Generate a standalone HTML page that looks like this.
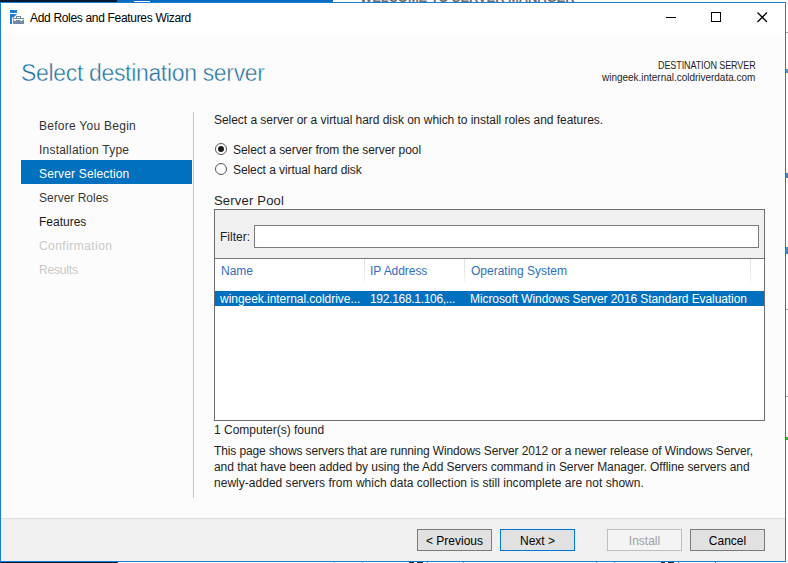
<!DOCTYPE html>
<html><head><meta charset="utf-8">
<style>
*{margin:0;padding:0;box-sizing:border-box}
html,body{width:788px;height:563px;overflow:hidden;background:#fff;font-family:"Liberation Sans",sans-serif;color:#1e1e1e;position:relative}
.a{position:absolute}
.t{position:absolute;white-space:pre;line-height:1;font-size:12px}
.nav{left:39px;color:#333}
.btn{position:absolute;top:529px;height:22px;width:75px;border:1px solid #7a7a7a;background:#e1e1e1;font-size:12px;text-align:center;line-height:22px;color:#000}
</style></head><body>
<!-- background strips -->
<div class="a" style="left:0;top:0;width:117px;height:2px;background:#061a33"></div>
<div class="a" style="left:117px;top:0;width:216px;height:2px;background:#0a6cc0"></div>
<div class="a" style="left:134px;top:1px;width:16px;height:1px;background:#fff"></div>
<div class="a" style="left:0;top:562px;width:118px;height:1px;background:#061a33"></div>
<div class="t" style="left:360px;top:-9px;font-size:13px;font-weight:bold;letter-spacing:-0.1px;color:#6e6e6e">WELCOME TO SERVER MANAGER</div>
<div class="a" style="left:786px;top:32px;width:2px;height:1px;background:#9a9a9a"></div>
<div class="a" style="left:786px;top:69px;width:2px;height:4px;background:#4a90d8"></div>
<div class="a" style="left:786px;top:173px;width:2px;height:5px;background:#3a7ad0"></div>
<div class="a" style="left:786px;top:247px;width:2px;height:7px;background:#3a8ad0"></div>
<div class="a" style="left:786px;top:309px;width:2px;height:1px;background:#9a9a9a"></div>
<div class="a" style="left:786px;top:396px;width:2px;height:1px;background:#9a9a9a"></div>
<div class="a" style="left:786px;top:437px;width:2px;height:3px;background:#00c400"></div>
<div class="a" style="left:334px;top:562px;width:1px;height:1px;background:#b0b0b0"></div>
<div class="a" style="left:362px;top:562px;width:1px;height:1px;background:#b0b0b0"></div>
<div class="a" style="left:409px;top:562px;width:5px;height:1px;background:#2a2a2a"></div>
<div class="a" style="left:417px;top:562px;width:6px;height:1px;background:#2a2a2a"></div>
<div class="a" style="left:427px;top:562px;width:1px;height:1px;background:#909090"></div>
<div class="a" style="left:463px;top:562px;width:1px;height:1px;background:#909090"></div>
<div class="a" style="left:596px;top:562px;width:1px;height:1px;background:#909090"></div>
<div class="a" style="left:614px;top:562px;width:1px;height:1px;background:#909090"></div>
<div class="a" style="left:661px;top:562px;width:4px;height:1px;background:#2a2a2a"></div>
<div class="a" style="left:668px;top:562px;width:6px;height:1px;background:#2a2a2a"></div>
<div class="a" style="left:678px;top:562px;width:1px;height:1px;background:#909090"></div>
<div class="a" style="left:715px;top:562px;width:1px;height:1px;background:#7a2a2a"></div>

<!-- window -->
<div class="a" style="left:0;top:2px;width:786px;height:560px;border:1px solid #1a7fd4;background:#fcfcfc"></div>
<div class="a" style="left:1px;top:3px;width:784px;height:30px;background:#fff"></div>
<div class="a" style="left:1px;top:518px;width:784px;height:43px;background:#f0f0f0;border-top:1px solid #dcdcdc"></div>

<!-- title bar -->
<svg class="a" style="left:9px;top:9px" width="16" height="16" viewBox="0 0 16 16">
  <rect x="1" y="1" width="7" height="3" fill="#1a7fd4"/>
  <path d="M1 5H8L4.5 8.5H3V15H1Z" fill="#1a7fd4"/>
  <path d="M7 7H12V9H15V15H4V9H7Z" fill="#6f8aa2"/>
  <rect x="8" y="8" width="3" height="1" fill="#fff"/>
  <path d="M4.5 10H14.5V11H13.5L12.8 12H11.6L11 11H7L6.4 12H5.2L4.5 11Z" fill="#fff"/>
</svg>
<div class="t" style="left:30px;top:12px;font-size:12px;letter-spacing:-0.32px;color:#000">Add Roles and Features Wizard</div>
<div class="a" style="left:666px;top:17px;width:10px;height:1px;background:#000"></div>
<div class="a" style="left:711px;top:12px;width:10px;height:10px;border:1px solid #000"></div>
<svg class="a" style="left:757px;top:12px" width="11" height="11" viewBox="0 0 11 11">
  <path d="M0.5 0.5L10 10M10 0.5L0.5 10" stroke="#000" stroke-width="1.25"/>
</svg>

<!-- header -->
<div class="t" style="left:21px;top:62px;font-size:23px;letter-spacing:-0.33px;color:#1b6f9c;-webkit-text-stroke:0.45px #fcfcfc">Select destination server</div>
<div class="t" style="left:658px;top:60.5px;font-size:10px;letter-spacing:-0.1px;transform:scaleX(0.9);transform-origin:0 0;color:#1e1e1e">DESTINATION SERVER</div>
<div class="t" style="left:602px;top:73px;font-size:10px;letter-spacing:-0.02px;color:#1e1e1e">wingeek.internal.coldriverdata.com</div>

<!-- nav -->
<div class="a" style="left:21px;top:160px;width:171px;height:24px;background:#0070bf"></div>
<div class="t nav" style="top:120px;letter-spacing:0.27px">Before You Begin</div>
<div class="t nav" style="top:144px;letter-spacing:0.22px">Installation Type</div>
<div class="t nav" style="top:168px;color:#fff;letter-spacing:0.15px">Server Selection</div>
<div class="t nav" style="top:192px;color:#3a3a3a">Server Roles</div>
<div class="t nav" style="top:216px;color:#1a1a1a">Features</div>
<div class="t nav" style="top:240px;color:#c8c8c8;letter-spacing:0.45px">Confirmation</div>
<div class="t nav" style="top:264px;color:#c8c8c8;letter-spacing:-0.17px">Results</div>

<div class="a" style="left:193px;top:112px;width:1px;height:386px;background:#c8c8c8"></div>

<!-- content -->
<div class="t" style="left:214px;top:114px;letter-spacing:-0.04px">Select a server or a virtual hard disk on which to install roles and features.</div>
<div class="a" style="left:215px;top:143px;width:12px;height:12px;border:1px solid #555;border-radius:50%;background:#fff"></div>
<div class="a" style="left:218px;top:146px;width:6px;height:6px;border-radius:50%;background:#1a1a1a"></div>
<div class="t" style="left:233px;top:144px;letter-spacing:-0.057px">Select a server from the server pool</div>
<div class="a" style="left:215px;top:163px;width:12px;height:12px;border:1px solid #555;border-radius:50%;background:#fff"></div>
<div class="t" style="left:233px;top:164px;letter-spacing:-0.08px">Select a virtual hard disk</div>

<div class="t" style="left:214px;top:194px;font-size:13px;letter-spacing:0.2px">Server Pool</div>

<!-- pool box -->
<div class="a" style="left:214px;top:209px;width:551px;height:212px;border:1px solid #6e6e6e;background:#fff"></div>
<div class="a" style="left:215px;top:210px;width:549px;height:49px;background:#f0f0f0;border-bottom:1px solid #767676"></div>
<div class="t" style="left:220px;top:231px">Filter:</div>
<div class="a" style="left:254px;top:225px;width:505px;height:23px;border:1px solid #7a7a7a;background:#fff"></div>
<div class="t" style="left:221px;top:265px;color:#2f6fc0">Name</div>
<div class="t" style="left:370px;top:265px;color:#2f6fc0;letter-spacing:-0.05px">IP Address</div>
<div class="t" style="left:471px;top:265px;color:#2f6fc0">Operating System</div>
<div class="a" style="left:364px;top:259px;width:1px;height:23px;background:linear-gradient(#dcdcdc,#f4f4f4)"></div>
<div class="a" style="left:464px;top:259px;width:1px;height:23px;background:linear-gradient(#dcdcdc,#f4f4f4)"></div>
<div class="a" style="left:750px;top:259px;width:1px;height:23px;background:linear-gradient(#dcdcdc,#f4f4f4)"></div>
<div class="a" style="left:215px;top:291px;width:549px;height:15px;background:#0070bf"></div>
<div class="t" style="left:220px;top:293px;color:#fff;letter-spacing:-0.04px">wingeek.internal.coldrive...</div>
<div class="t" style="left:370px;top:293px;color:#fff;letter-spacing:-0.3px">192.168.1.106,...</div>
<div class="t" style="left:470px;top:293px;color:#fff;letter-spacing:-0.08px">Microsoft Windows Server 2016 Standard Evaluation</div>

<div class="t" style="left:214px;top:424px">1 Computer(s) found</div>
<div class="a" style="left:214px;top:443px;font-size:12px;line-height:16px;white-space:pre"><div style="letter-spacing:-0.115px">This page shows servers that are running Windows Server 2012 or a newer release of Windows Server,</div><div style="letter-spacing:-0.055px">and that have been added by using the Add Servers command in Server Manager. Offline servers and</div><div style="letter-spacing:0.02px">newly-added servers from which data collection is still incomplete are not shown.</div></div>

<div class="btn" style="left:417px">&lt; Previous</div>
<div class="btn" style="left:500px;border-color:#0078d7">Next &gt;</div>
<div class="btn" style="left:607px;border-color:#bfbfbf;background:#f4f4f4;color:#a0a0a0">Install</div>
<div class="btn" style="left:690px">Cancel</div>
</body></html>
